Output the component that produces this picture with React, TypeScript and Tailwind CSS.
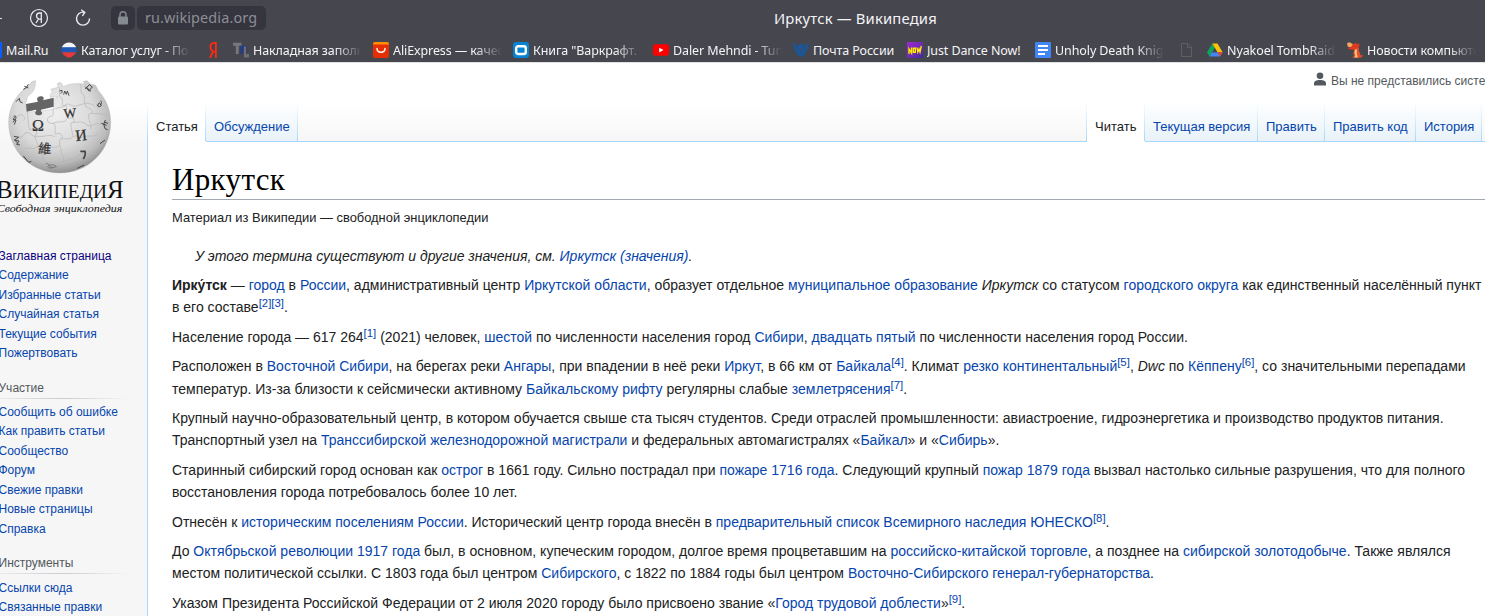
import type { ReactNode } from "react";

const bar = "font-['Noto_Sans',sans-serif]";

function A({ children }: { children: ReactNode }) {
  return <a className="text-[#0645ad]">{children}</a>;
}

function Sup({ children }: { children: ReactNode }) {
  return <sup className="static align-[5.500px] text-[11.4px] leading-none tracking-normal text-[#0645ad]">{children}</sup>;
}

function Line({ className = "", children }: { className?: string; children: ReactNode }) {
  return (
    <div className="h-[22.4px]">
      <span className={"inline-block whitespace-nowrap " + className}>{children}</span>
    </div>
  );
}

function Bookmark({ className, icon, text, fade = true }: { className: string; icon: ReactNode; text: string; fade?: boolean }) {
  return (
    <div className={"flex shrink-0 items-center gap-1 " + className}>
      <svg className="size-4 shrink-0" viewBox="0 0 16 16">{icon}</svg>
      <span className={"overflow-hidden pt-[2px] whitespace-nowrap " + (fade ? "w-[109px] [mask-image:linear-gradient(to_right,black_75%,transparent)]" : "")}>{text}</span>
    </div>
  );
}

function BrowserBar() {
  return (
    <header className={"h-[62px] bg-[#46464f] text-[#f4f4f6] " + bar}>
      <div className="grid h-9 grid-cols-[774px_1fr] items-center">
        <div className="flex items-center">
          <span className="h-px w-[2px] bg-[#dedee2]" />
          <svg className="ml-[27px] size-5" viewBox="0 0 20 20">
            <circle cx="10" cy="10" r="8.5" fill="none" stroke="#ececf0" strokeWidth="1.2" />
            <path d="M12.3 15V5H10.6C8.5 5 7.5 6.3 7.5 7.9c0 1.4.7 2.2 2 3.1L7 15M12.3 11.2H9.8" fill="none" stroke="#ececf0" strokeWidth="1.3" />
          </svg>
          <svg className="ml-[25px] size-[18px]" viewBox="0 0 18 18" fill="none" stroke="#ececf0" strokeWidth="1.4">
            <path d="M10 3.2A6.5 6.5 0 1 0 15.5 9.4M7.2.8l3.600 2.600L8.400 6.800" />
          </svg>
          <div className="ml-[19px] flex h-6 w-6 items-center justify-center rounded-[5px] bg-[#34353e]">
            <svg className="h-[14px] w-[10px]" viewBox="0 0 10 14">
              <rect y="5.5" width="10" height="8" rx="1" fill="#868b91" />
              <path d="M2 6V3.8a3 3 0 0 1 6 0V6" fill="none" stroke="#868b91" strokeWidth="1.4" />
            </svg>
          </div>
          <div className="ml-[2px] flex h-6 w-[129px] items-center rounded-[5px] bg-[#34353e] pl-2 text-[14.4px] tracking-[0.14px] whitespace-nowrap text-[#8d8e95]">ru.wikipedia.org</div>
        </div>
        <div className="text-[14.8px] tracking-[0.18px] whitespace-nowrap">Иркутск — Википедия</div>
      </div>
      <div className="flex h-7 items-center overflow-hidden text-[12.5px] tracking-[-0.1px]">
        <div className="flex w-[61px] shrink-0 items-center gap-1">
          <span className="h-4 w-[2px] bg-[#0a5cff]" />
          <span className="pt-[2px] tracking-[-0.2px]">Mail.Ru</span>
        </div>
        <Bookmark className="w-[147px]" text="Каталог услуг - Портал" icon={<><path d="M1 4.7C3 1.5 5 .5 8 .5s5 1 7 4.2v1.5H1z" fill="#f4f4f4" /><path d="M.5 5.2h15v5.5H.5z" fill="#1f57b4" /><path d="M1 10.2h14c-1 3-5 5.3-7 5.3s-6-2.3-7-5.3z" fill="#e33a3c" /></>} />
        <svg className="mr-[14px] h-4 w-[11px] shrink-0" viewBox="0 0 11 16"><path d="M7.9 16V.9H6C3.400.9 2.300 2.800 2.300 5s1 3.300 2.800 4.700L1.900 16M7.900 9.700H5" fill="none" stroke="#ff2a10" strokeWidth="1.8" /></svg>
        <Bookmark className="w-[140px]" text="Накладная заполнить" icon={<><path d="M0 .8h8.500v3H5.700V12H2.800V3.800H0z" fill="#77777f" /><path d="M7 3.800h6.500v8h-2.700v-5h-1v5H7z" fill="#243d83" /><path d="M11 4.500h2V12h3v3.500h-5z" fill="#6e6e76" /></>} />
        <Bookmark className="w-[140px]" text="AliExpress — качественно" icon={<><rect width="16" height="16" rx="2" fill="#e62e04" /><path d="M0 2.500V2q0-2 2-2h12q2 0 2 2v.5H0z" fill="#ff9000" /><path d="M4 6.5c0 5 8 5 8 0" fill="none" stroke="#fff" strokeWidth="1.4" strokeLinecap="round" /></>} />
        <Bookmark className="w-[140px]" text={'Книга "Варкрафт. Хроники'} icon={<><rect width="16" height="16" rx="3" fill="#0683d1" /><rect x="3.2" y="4.2" width="9.6" height="7.8" rx="2" fill="none" stroke="#fff" strokeWidth="2.4" /></>} />
        <Bookmark className="w-[140px]" text="Daler Mehndi - Tunak" icon={<><rect y="2.2" width="16" height="11.6" rx="2.8" fill="#f00" /><path d="m6.2 5.8 4.3 2.3-4.3 2.3z" fill="#fff" /></>} />
        <Bookmark className="w-[114px]" fade={false} text="Почта России" icon={<><path d="M8 1 9 2.5 10.5 2l-.5 2 1 1.5L12.5 3 16 1l-1 4.5-1.5 4-2.5 1.5 2 1-2 1.5-1.5-.5L8 15.5 6.500 13l-1.500.5L3 12l2-1-2.500-1.500L1 5.500 0 1l3.500 2L5 5.500 6 4l-.5-2L7 2.500z" fill="#1558a0" /><path d="M2.500 4 6 9M13.500 4 10 9M8 6v5M6.500 7.500h3" stroke="#46464f" strokeWidth=".7" /></>} />
        <Bookmark className="w-[128px]" fade={false} text="Just Dance Now!" icon={<><defs><linearGradient id="jdn" x2="1" y2="1"><stop stopColor="#a02ad0" /><stop offset="1" stopColor="#402a9c" /></linearGradient></defs><rect width="16" height="16" fill="url(#jdn)" /><path d="M2 12V7l2.500 4V5.500M6.300 6.300h2v4h-2zM10 5.500l.8 4.500 1.200-3 1 3L14.300 4" fill="none" stroke="#ffe900" strokeWidth="1.400" /></>} />
        <Bookmark className="w-[146px]" text="Unholy Death Knight" icon={<><rect width="16" height="16" rx="1" fill="#4285f4" /><path d="M3 4h10M3 8h10M3 12h7" stroke="#fff" strokeWidth="1.800" /></>} />
        <svg className="mr-[15px] h-[14px] w-[11px] shrink-0" viewBox="0 0 11 14"><path d="M.5.5H7L10.500 4v9.500H.500zM6.500.5V4.500h4" fill="none" stroke="#5e5e63" /></svg>
        <Bookmark className="w-[140px]" text="Nyakoel TombRaider" icon={<><path d="M5.300 1.500 0 10.500 2.600 14.500 8 5.500z" fill="#11a45c" /><path d="M5.300 1.500h5.200L15.600 10.200h-5.200z" fill="#ffc107" /><path d="M5 10.200h10.600L13 14.500H2.600z" fill="#4285f4" /><path d="m10.500 10.200h5.100L13 14.500z" fill="#e8402f" /><path d="M8 6.500 5.800 10.200h4.400z" fill="#46464f" /></>} />
        <Bookmark className="w-[138px]" text="Новости компьютеров" icon={<><path d="M0 1.200 2.500.3 6 2.200 4.500 5.200.8 4.800z" fill="#f9a95c" /><path d="M6 2.500 9 .8l1 1.700 2.300-1.500v3l-1 3-4 1-4.800-.8-2-1.200 3.200-.8z" fill="#e23a22" /><path d="m8 7 4-1.200-.3 3 1.700 3.200-1 3.700H5.500L7 13.500 6.200 11z" fill="#e8502b" /><path d="M8 7.500h2l-.3 3.500 1 4.500H7.500l.9-2.500-.9-2z" fill="#ffc383" /><path d="m12.500 13.500 1.500-.5 2 .5-1.500 2h-3z" fill="#e84a2a" /></>} />
      </div>
    </header>
  );
}

function Logo() {
  return (
    <svg className="-mt-px block h-[160px] w-[147px]" viewBox="0 0 441 480">
      <defs>
        <radialGradient id="globe" cx="0.45" cy="0.35" r="0.68">
          <stop offset="0" stopColor="#efefef" />
          <stop offset="0.55" stopColor="#dadada" />
          <stop offset="0.8" stopColor="#bbb" />
          <stop offset="1" stopColor="#858585" />
        </radialGradient>
      </defs>
      <path d="M107 56 97 58 86 70 74 80C44 104 26 141 26 181c0 86 67 152 153 152s153-66 153-152c0-38-14-70-37-95l-8-16-15-4-11-10-11 2 3 8Q219 60 188 74l-2-9q-8-7-14 0l2 11-22 6q9 7 0 14l-2 10 24-2-16 11 4 26-34 6-45 3-7-24 8-25q18-8 22-31z" fill="url(#globe)" stroke="#aaa" strokeWidth="1" />
      <path d="m78 126 36-7c-6-8-2-15 8-16 9 0 12 5 7 12l32-8v27l-38 9c-2 8 6 5 3 12-3 6-16 6-20 0-2-8 5-7 2-12l-28 6z" fill="#656565" />
      <g fill="none" stroke="#b4b4b4" strokeWidth="2">
        <path d="M82 150c4 24 0 33 7 54 14-8 27 3 18 16-5 13 8 21 7 34 12 21 15 45 36 64M160 140c-3 16 5 22-9 23-14 3-11 24 7 21 13 0 4 22 9 33 18-9 26 9 13 16-5 12 4 25 4 42 11 8 3 24 12 38M178 76c5 15-6 27 8 33 5 16-8 22 12 22 5 13-4 30 7 39 22-6 24 8 8 13-2 15 5 24 5 38M240 67c8 18-3 25 11 31 6 18-2 27 11 40 18 2 21 18 5 18-5 17 9 28 5 45" />
        <path d="M28 166c15-1 24 5 29-7 14-4 20 10 14 16M40 224c18-3 26 9 35-11 17-8 17 13 35 10 25 3 35-8 54 1M166 140c18-7 26-2 31-13 13-5 17 11 37 3 27-7 29-10 49 1M158 185c22-12 38 2 42-15M218 182c23-4 37-3 43 8 20 6 22-10 42-4M73 260c13-7 28 6 35-5 17-7 19 12 35 3 19-6 24 3 37-8M182 231c16-4 27 5 35-6 17-10 20 7 36-1 14-5 27 3 40-7M133 305c24-8 39 3 52-5 21-9 36-5 55-22M275 154c19 3 33-3 44 9M245 275c17-4 28 5 40-1" />
      </g>
      <g fill="#333" stroke="#333" strokeWidth=".7" fontFamily="Liberation Serif, serif">
        <text x="96" y="207" fontSize="48">Ω</text>
        <text transform="translate(192 168) rotate(-5)" fontSize="40">W</text>
        <text transform="translate(228 238) rotate(-7)" fontSize="48">И</text>
        <text transform="translate(114 273) rotate(3)" fontSize="39" fontFamily="Noto Sans CJK TC, sans-serif">維</text>
      </g>
      <g fill="none" stroke="#444" strokeWidth="3.500">
        <path d="M70 82q10-2 15-15M73 73l12 5M48 119l10-10q-1 13 10 14M258 75l15 13M256 81l12-13 9 7-10 11M256 74l12 14M316 174q-9 12-1 26l8 3M314 181l10 3M70 282l16 19 8-3M300 245l15-11M232 319l20-10M304 184l16 6" strokeWidth="3" />
        <path d="m178 87 8-2q3 6-4 10M191 98l3-11 5 10 3-10 5 14M291 128q4 11 13 3l-6-9q-5 4-3 9M302 130q5-10 0-14M41 162l7 1-9 9 9 2-5 14M39 181l10-14M42 223l14 3-13 8 14 3-7 10 10 2M45 235l9 10" strokeWidth="2.800" />
        <path d="M241 268h14q3 10-5 23" strokeWidth="5" />
        <path d="M137 306q8-5 11 4t14 6q12-2 3-6t-19 0q-9 9 12 8" strokeWidth="2" stroke="#666" />
      </g>
      <g fill="#111">
        <text x="-12" y="409" fontSize="75" fontFamily="Liberation Serif, serif" textLength="383"><tspan>В</tspan><tspan fontSize="58">ИКИПЕДИ</tspan><tspan>Я</tspan></text>
        <text x="-10" y="450" fontSize="34" fontStyle="italic" fontFamily="Liberation Serif, serif" textLength="377" lengthAdjust="spacingAndGlyphs">Свободная энциклопедия</text>
      </g>
    </svg>
  );
}

const menus = [
  { title: "Участие", items: ["Сообщить об ошибке", "Как править статьи", "Сообщество", "Форум", "Свежие правки", "Новые страницы", "Справка"] },
  { title: "Инструменты", items: ["Ссылки сюда", "Связанные правки"] },
];
const mainItems = ["Заглавная страница", "Содержание", "Избранные статьи", "Случайная статья", "Текущие события", "Пожертвовать"];

function Sidebar() {
  return (
    <aside className="w-[147px] shrink-0 overflow-hidden">
      <Logo />
      <nav className="-ml-[1.5px] pt-[24.900px] text-[12px] leading-[19.450px] whitespace-nowrap text-[#0645ad]">
        {mainItems.map((t, i) => <div key={t} className={i === 0 ? "text-[#0b0080]" : ""}>{t}</div>)}
        {menus.map((m) => (
          <section key={m.title} className="pt-[15.200px]">
            <h3 className="h-[19px] text-[#54595d]">{m.title}</h3>
            <div className="mb-[4.200px] h-px w-[130px] bg-linear-to-r from-[#c8ccd1]/30 via-[#c8ccd1] to-transparent" />
            {m.items.map((t) => <div key={t}>{t}</div>)}
          </section>
        ))}
      </nav>
    </aside>
  );
}

function Tab({ className, active = false, children }: { className: string; active?: boolean; children: ReactNode }) {
  return (
    <div className={"flex h-10 shrink-0 border-b " + (active ? "border-white bg-white text-[#202122] " : "border-[#a7d7f9] bg-linear-to-b from-white to-[#e8f2f8] text-[#0645ad] ") + className}>
      <span className="grow pt-4 pl-2 text-[13px] leading-[18px] whitespace-nowrap">{children}</span>
      <span className="w-px bg-linear-to-b from-white to-[#a7d7f9]" />
    </div>
  );
}

function Article() {
  return (
    <main className="h-[474px] overflow-hidden border-l border-[#a7d7f9] bg-white pl-6 text-[14px] leading-[22.4px] text-[#202122]">
      <h1 className="mt-[18px] h-[40px] border-b border-[#a2a9b1] font-['Liberation_Serif',serif] text-[31px] leading-[40px] tracking-[0.35px] text-black">Иркутск</h1>
      <div className="mt-[8px] h-[20px] text-[12.900px] leading-[20px] whitespace-nowrap">Материал из Википедии — свободной энциклопедии</div>
      <div className="mt-[16.600px] ml-[23px]"><Line className="italic">У этого термина существуют и другие значения, см. <A>Иркутск (значения)</A>.</Line></div>
      <div className="mt-[7px] flex flex-col gap-[7px]">
        <section>
          <Line><b>Ирку́тск</b> — <A>город</A> в <A>России</A>, административный центр <A>Иркутской области</A>, образует отдельное <A>муниципальное образование</A> <i>Иркутск</i> со статусом <A>городского округа</A> как единственный населённый пункт</Line>
          <Line>в его составе<Sup>[2][3]</Sup>.</Line>
        </section>
        <Line>Население города — 617 264<Sup>[1]</Sup> (2021) человек, <A>шестой</A> по численности населения город <A>Сибири</A>, <A>двадцать пятый</A> по численности населения город России.</Line>
        <section>
          <Line>Расположен в <A>Восточной Сибири</A>, на берегах реки <A>Ангары</A>, при впадении в неё реки <A>Иркут</A>, в 66 км от <A>Байкала</A><Sup>[4]</Sup>. Климат <A>резко континентальный</A><Sup>[5]</Sup>, <i>Dwc</i> по <A>Кёппену</A><Sup>[6]</Sup>, со значительными перепадами</Line>
          <Line>температур. Из-за близости к сейсмически активному <A>Байкальскому рифту</A> регулярны слабые <A>землетрясения</A><Sup>[7]</Sup>.</Line>
        </section>
        <section>
          <Line>Крупный научно-образовательный центр, в котором обучается свыше ста тысяч студентов. Среди отраслей промышленности: авиастроение, гидроэнергетика и производство продуктов питания.</Line>
          <Line>Транспортный узел на <A>Транссибирской железнодорожной магистрали</A> и федеральных автомагистралях «<A>Байкал</A>» и «<A>Сибирь</A>».</Line>
        </section>
        <section>
          <Line>Старинный сибирский город основан как <A>острог</A> в 1661 году. Сильно пострадал при <A>пожаре 1716 года</A>. Следующий крупный <A>пожар 1879 года</A> вызвал настолько сильные разрушения, что для полного</Line>
          <Line>восстановления города потребовалось более 10 лет.</Line>
        </section>
        <Line>Отнесён к <A>историческим поселениям России</A>. Исторический центр города внесён в <A>предварительный список Всемирного наследия ЮНЕСКО</A><Sup>[8]</Sup>.</Line>
        <section>
          <Line>До <A>Октябрьской революции 1917 года</A> был, в основном, купеческим городом, долгое время процветавшим на <A>российско-китайской торговле</A>, а позднее на <A>сибирской золотодобыче</A>. Также являлся</Line>
          <Line>местом политической ссылки. С 1803 года был центром <A>Сибирского</A>, с 1822 по 1884 годы был центром <A>Восточно-Сибирского генерал-губернаторства</A>.</Line>
        </section>
        <Line>Указом Президента Российской Федерации от 2 июля 2020 городу было присвоено звание «<A>Город трудовой доблести</A>»<Sup>[9]</Sup>.</Line>
      </div>
    </main>
  );
}

export default function App() {
  return (
    <div className="h-[616px] w-[1485px] overflow-hidden bg-[#f6f6f6] font-['Liberation_Sans',Arial,sans-serif]">
      <BrowserBar />
      <div className="flex h-[554px] border-t border-[#e2e2e5] bg-[linear-gradient(#fff_40px,#f6f6f6_80px)]">
        <Sidebar />
        <div className="w-[1338px]">
          <div className="flex h-[39px] items-start justify-end overflow-hidden pt-[8px] text-[12px] leading-[20px] text-[#54595d]">
            <svg className="mt-px mr-[5px] h-[14px] w-[12px] shrink-0" viewBox="0 0 12 14"><circle cx="6" cy="3.800" r="3.300" fill="#54595d" /><path d="M0 13.500v-2C0 9 2.500 8 6 8s6 1 6 3.500v2z" fill="#54595d" /></svg>
            <span className="w-[154px] whitespace-nowrap">Вы не представились системе</span>
          </div>
          <div className="flex h-10">
            <span className="w-px bg-linear-to-b from-white to-[#a7d7f9]" />
            <Tab active className="w-[58px]">Статья</Tab>
            <Tab className="w-[92px]">Обсуждение</Tab>
            <div className="grow border-b border-[#a7d7f9]" />
            <span className="w-px bg-linear-to-b from-white to-[#a7d7f9]" />
            <Tab active className="w-[58px]">Читать</Tab>
            <Tab className="w-[113px]">Текущая версия</Tab>
            <Tab className="w-[67px]">Править</Tab>
            <Tab className="w-[91px]">Править код</Tab>
            <Tab className="w-[66px]">История</Tab>
            <div className="w-[3px] border-b border-[#a7d7f9]" />
          </div>
          <Article />
        </div>
      </div>
    </div>
  );
}
